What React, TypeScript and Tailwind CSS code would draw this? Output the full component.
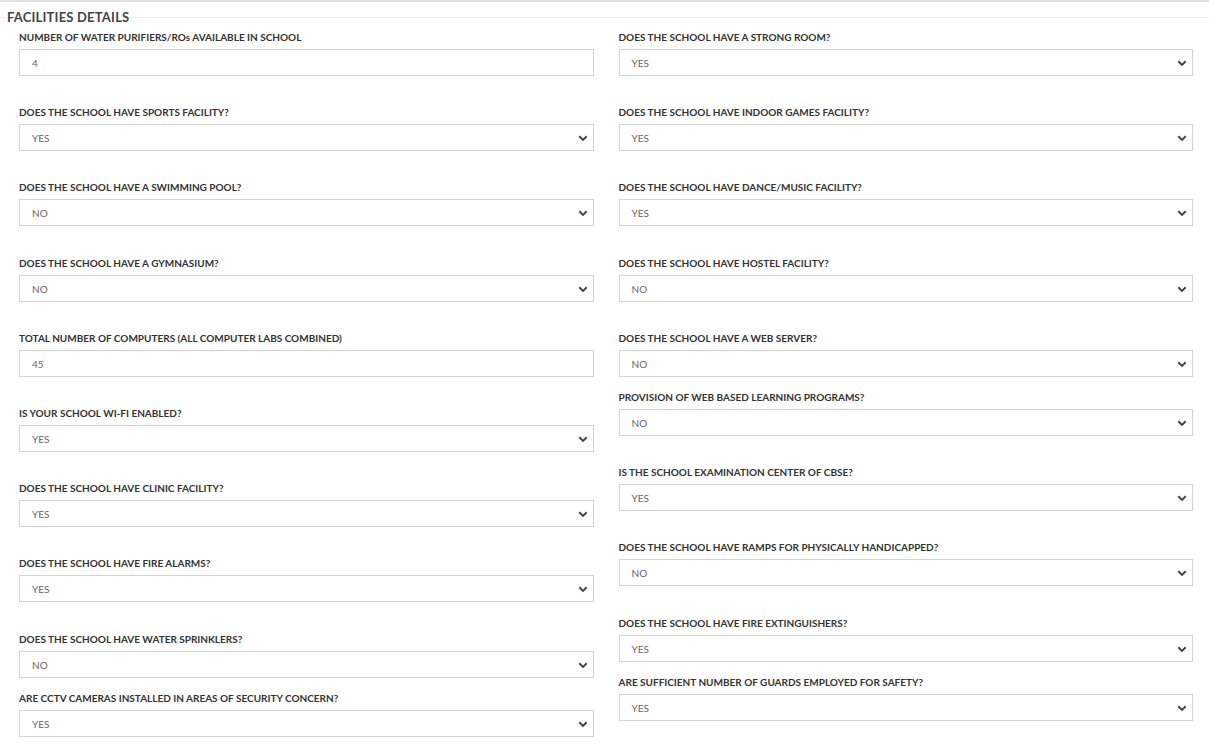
type Field = {
  label: string;
  value: string;
  select?: boolean;
  mt?: number;
};

const left: Field[] = [
  { label: 'NUMBER OF WATER PURIFIERS/ROs AVAILABLE IN SCHOOL', value: '4' },
  { label: 'DOES THE SCHOOL HAVE SPORTS FACILITY?', value: 'YES', select: true },
  { label: 'DOES THE SCHOOL HAVE A SWIMMING POOL?', value: 'NO', select: true },
  { label: 'DOES THE SCHOOL HAVE A GYMNASIUM?', value: 'NO', select: true, mt: 31 },
  { label: 'TOTAL NUMBER OF COMPUTERS (ALL COMPUTER LABS COMBINED)', value: '45' },
  { label: 'IS YOUR SCHOOL WI-FI ENABLED?', value: 'YES', select: true },
  { label: 'DOES THE SCHOOL HAVE CLINIC FACILITY?', value: 'YES', select: true },
  { label: 'DOES THE SCHOOL HAVE FIRE ALARMS?', value: 'YES', select: true },
  { label: 'DOES THE SCHOOL HAVE WATER SPRINKLERS?', value: 'NO', select: true, mt: 31 },
  { label: 'ARE CCTV CAMERAS INSTALLED IN AREAS OF SECURITY CONCERN?', value: 'YES', select: true, mt: 14 },
];

const right: Field[] = [
  { label: 'DOES THE SCHOOL HAVE A STRONG ROOM?', value: 'YES', select: true },
  { label: 'DOES THE SCHOOL HAVE INDOOR GAMES FACILITY?', value: 'YES', select: true },
  { label: 'DOES THE SCHOOL HAVE DANCE/MUSIC FACILITY?', value: 'YES', select: true },
  { label: 'DOES THE SCHOOL HAVE HOSTEL FACILITY?', value: 'NO', select: true, mt: 31 },
  { label: 'DOES THE SCHOOL HAVE A WEB SERVER?', value: 'NO', select: true },
  { label: 'PROVISION OF WEB BASED LEARNING PROGRAMS?', value: 'NO', select: true, mt: 14 },
  { label: 'IS THE SCHOOL EXAMINATION CENTER OF CBSE?', value: 'YES', select: true },
  { label: 'DOES THE SCHOOL HAVE RAMPS FOR PHYSICALLY HANDICAPPED?', value: 'NO', select: true },
  { label: 'DOES THE SCHOOL HAVE FIRE EXTINGUISHERS?', value: 'YES', select: true, mt: 31 },
  { label: 'ARE SUFFICIENT NUMBER OF GUARDS EMPLOYED FOR SAFETY?', value: 'YES', select: true, mt: 14 },
];

function Chevron() {
  return (
    <svg width="10" height="7" viewBox="0 0 10 7" className="text-[#444]">
      <path d="M1.3 1.3 L5 4.9 L8.7 1.3" fill="none" stroke="currentColor" strokeWidth="2" />
    </svg>
  );
}

function FormField({ field, first }: { field: Field; first: boolean }) {
  const mt = first ? 0 : field.mt ?? 30;
  return (
    <div className="flex flex-col gap-[5px]" style={{ marginTop: mt }}>
      <label className="text-[10px] leading-[13px] font-bold text-[#333]">
        {field.label}
      </label>
      <div className="flex h-[27px] items-center justify-between border border-[#d3d3d3] bg-white pl-[12px] pr-[5px] pt-[1px] text-[10px] text-[#666]">
        <span>{field.value}</span>
        {field.select && <Chevron />}
      </div>
    </div>
  );
}

export default function App() {
  return (
    <main
      className="min-h-[753px] bg-white border-t-2 border-[#e2e2e2]"
      style={{ fontFamily: 'Lato, "Noto Sans", sans-serif' }}
    >
      <div className="flex items-center pt-[7px]">
        <div className="h-px w-[7px] bg-[#eee]" />
        <h2 className="text-[13px] leading-[16px] font-bold tracking-[0.2px] text-[#444] pr-[2px]">
          FACILITIES DETAILS
        </h2>
        <div className="h-px flex-1 bg-[#eee]" />
      </div>

      <section className="grid grid-cols-2 gap-x-[25px] pl-[19px] pr-[16px] pt-[6px]">
        <div className="flex flex-col">
          {left.map((f, i) => (
            <FormField key={f.label} field={f} first={i === 0} />
          ))}
        </div>
        <div className="flex flex-col">
          {right.map((f, i) => (
            <FormField key={f.label} field={f} first={i === 0} />
          ))}
        </div>
      </section>
    </main>
  );
}
